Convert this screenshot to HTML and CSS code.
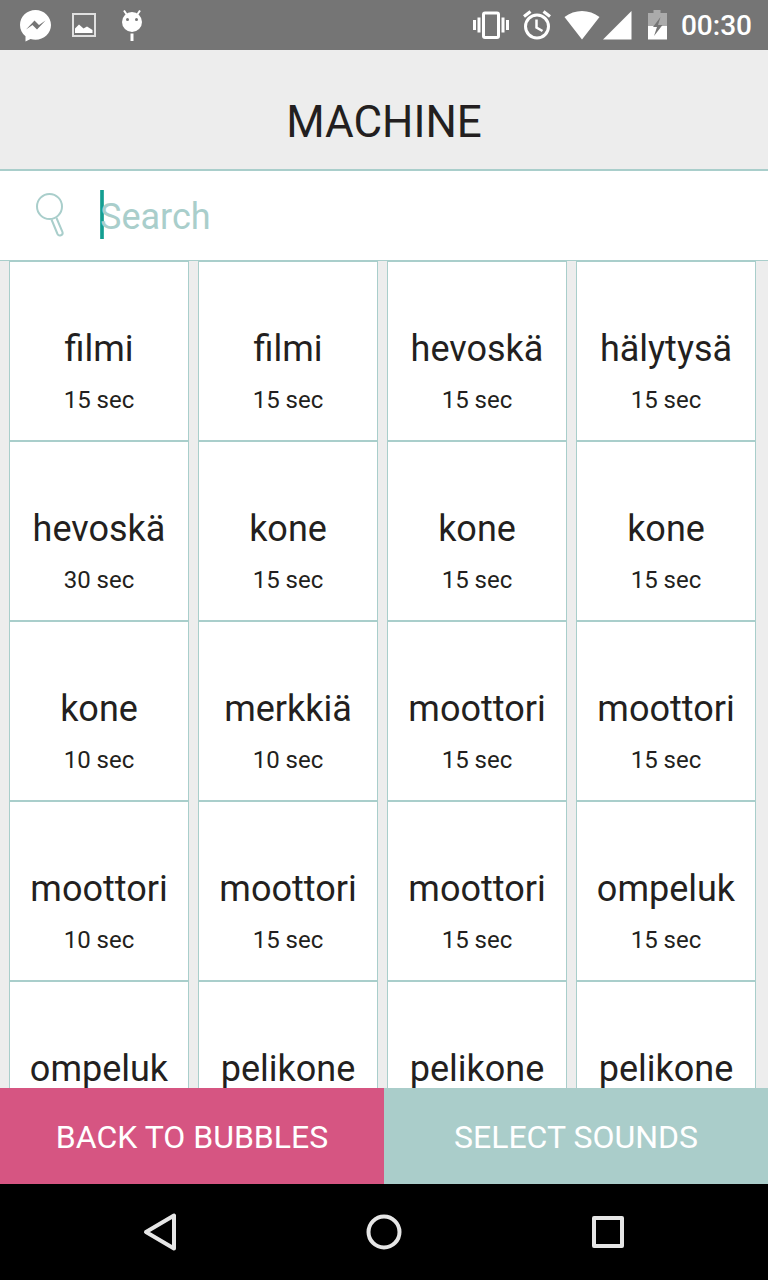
FILE: index.html
```html
<!DOCTYPE html>
<html lang="en">
<head>
<meta charset="utf-8">
<meta name="viewport" content="width=device-width, initial-scale=1">
<title>Machine</title>
<link rel="stylesheet" href="styles.css">
</head>
<body>
<div class="status">
  <svg class="status-icons" width="152" height="50" viewBox="0 0 152 50" aria-hidden="true">
    <path fill="#fff" d="M35.500 10C27 10 20 16.500 20 25c0 4.500 2 8.500 5.500 11.200V41.500l5-2.500c1.600.5 3.300.7 5 .7C44 39.700 51 33.200 51 25S44 10 35.500 10z"/>
    <path fill="#757575" d="M26 29.500l8.500-9 4.500 4.500 6.500-4.500-8.500 9-4.500-4.500z"/>
    <rect x="73" y="14" width="22" height="22" fill="none" stroke="#e0e0e0" stroke-width="2"/>
    <path fill="#fff" d="M75 33v-4.500l4-4 4.500 4 3.500-2 5.500 3.500v3z"/>
    <circle cx="132" cy="22" r="10" fill="#fff"/>
    <path stroke="#fff" stroke-width="2" d="M127 15l-3-4.500M137 15l3-4.500"/>
    <circle cx="127.500" cy="19.500" r="1.500" fill="#757575"/><circle cx="136.500" cy="19.500" r="1.500" fill="#757575"/>
    <path fill="#fff" d="M130.500 33.500h3V41h-3z"/>
  </svg>
  <svg class="status-icons" width="200" height="50" viewBox="470 0 200 50" aria-hidden="true">
    <path fill="#fff" d="M473 20h3v10h-3zM477.500 17.500h3v15h-3zM501.500 17.500h3v15h-3zM506 20h3v10h-3z"/>
    <rect x="483.500" y="13" width="15" height="24.500" rx="1.500" fill="none" stroke="#fff" stroke-width="3"/>
    <circle cx="537" cy="26.500" r="11.500" fill="none" stroke="#fff" stroke-width="3"/>
    <path fill="none" stroke="#fff" stroke-width="2.500" d="M536.500 19.500v8l6 3.500"/>
    <path stroke="#fff" stroke-width="3.200" d="M524 16.500l6.500-5M550 16.500l-6.500-5"/>
    <path fill="#fff" d="M564.500 17c10-8 25-8 35 0L582 39.500zM603 39.500L631.500 11v28.500z"/>
    <path fill="#ababab" d="M648 13h5.500v-3h7v3h6.500v13h-19z"/>
    <path fill="#fff" d="M648 26h19v13.500h-19z"/>
    <path fill="#757575" d="M660.500 17l-7.500 10h4l-3 9 8.500-11h-4.500z"/>
  </svg>
  <time class="clock">00:30</time>
</div>
<header class="header"><h1 class="title">MACHINE</h1></header>
<form class="search">
  <label class="search-label" for="q" aria-label="Search">
    <svg width="30" height="46" viewBox="0 0 30 46" fill="none" stroke="#a9cecb" stroke-width="2" aria-hidden="true">
      <circle cx="14.500" cy="14.500" r="12.500"/>
      <path d="M16.500 27.500l6 14.500c1.500 3 6 1 5-2l-6-14"/>
    </svg>
  </label>
  <div class="field">
    <span class="caret"></span>
    <input class="input" id="q" type="text" placeholder="Search">
  </div>
</form>
<main class="grid">
  <article class="card"><h2 class="name">filmi</h2><p class="length">15 sec</p></article>
  <article class="card"><h2 class="name">filmi</h2><p class="length">15 sec</p></article>
  <article class="card"><h2 class="name">hevoskä</h2><p class="length">15 sec</p></article>
  <article class="card"><h2 class="name">hälytysä</h2><p class="length">15 sec</p></article>
  <article class="card"><h2 class="name">hevoskä</h2><p class="length">30 sec</p></article>
  <article class="card"><h2 class="name">kone</h2><p class="length">15 sec</p></article>
  <article class="card"><h2 class="name">kone</h2><p class="length">15 sec</p></article>
  <article class="card"><h2 class="name">kone</h2><p class="length">15 sec</p></article>
  <article class="card"><h2 class="name">kone</h2><p class="length">10 sec</p></article>
  <article class="card"><h2 class="name">merkkiä</h2><p class="length">10 sec</p></article>
  <article class="card"><h2 class="name">moottori</h2><p class="length">15 sec</p></article>
  <article class="card"><h2 class="name">moottori</h2><p class="length">15 sec</p></article>
  <article class="card"><h2 class="name">moottori</h2><p class="length">10 sec</p></article>
  <article class="card"><h2 class="name">moottori</h2><p class="length">15 sec</p></article>
  <article class="card"><h2 class="name">moottori</h2><p class="length">15 sec</p></article>
  <article class="card"><h2 class="name">ompeluk</h2><p class="length">15 sec</p></article>
  <article class="card"><h2 class="name">ompeluk</h2></article>
  <article class="card"><h2 class="name">pelikone</h2></article>
  <article class="card"><h2 class="name">pelikone</h2></article>
  <article class="card"><h2 class="name">pelikone</h2></article>
</main>
<div class="actions">
  <button class="action back" type="button">BACK TO BUBBLES</button>
  <button class="action select" type="button">SELECT SOUNDS</button>
</div>
<nav class="navbar">
  <button class="key" type="button" aria-label="Back"><svg width="40" height="40" viewBox="0 0 40 40"><path d="M6 20L34 3.500v33z"/></svg></button>
  <button class="key" type="button" aria-label="Home"><svg width="40" height="40" viewBox="0 0 40 40"><circle cx="20" cy="20" r="15.500"/></svg></button>
  <button class="key" type="button" aria-label="Recent apps"><svg width="40" height="40" viewBox="0 0 40 40"><rect x="6" y="6" width="28" height="28"/></svg></button>
</nav>
</body>
</html>
```

FILE: styles.css
```css
* { box-sizing: border-box; }
body {
  margin: 0;
  height: 100vh;
  display: flex;
  flex-direction: column;
  background: #ededed;
  color: #231f20;
  font-family: Roboto, sans-serif;
}
h1, h2, p { margin: 0; font-weight: 400; }
button { border: 0; padding: 0; font: inherit; }
.status {
  flex: none;
  display: flex;
  align-items: center;
  background: #757575;
  padding-right: 16px;
}
.status-icons { display: block; }
.status-icons + .status-icons { margin-left: auto; }
.clock {
  margin-left: 11px;
  padding-top: 2px;
  color: #fff;
  font-size: 28px;
  line-height: 32px;
  font-weight: 500;
}
.header {
  flex: none;
  padding: 46px 16px 21px;
  border-bottom: 2px solid #a9cecb;
  text-align: center;
}
.title { font-size: 44px; line-height: 52px; }
.search {
  flex: none;
  display: flex;
  align-items: center;
  padding: 19px 36px 21px 35px;
  background: #fff;
  border-bottom: 1px solid #a9cecb;
}
.search-label { display: flex; }
.field { position: relative; flex: 1; margin-left: 35px; }
.caret {
  position: absolute;
  left: 0;
  top: 0;
  width: 4px;
  height: 100%;
  background: linear-gradient(90deg, #4db6ac, #009688 50%, #4db6ac);
}
.input {
  position: relative;
  display: block;
  width: 100%;
  height: 49px;
  padding: 4px 0 0;
  border: 0;
  outline: 0;
  background: transparent;
  color: #231f20;
  font: 36px/42px Roboto, sans-serif;
}
.input::placeholder { color: #a9cecb; opacity: 1; }
.grid {
  flex: 1;
  min-height: 0;
  overflow-y: auto;
  scrollbar-width: none;
  display: grid;
  grid-template-columns: repeat(4, minmax(0, 1fr));
  grid-auto-rows: min-content;
  column-gap: 9px;
  padding: 0 12px 0 9px;
}
.card {
  min-height: 180px;
  padding: 65px 0 25px;
  background: #fff;
  border: 1px solid #a9cecb;
  text-align: center;
}
.name { font-size: 36px; line-height: 44px; }
.length { margin-top: 14px; font-size: 24px; line-height: 30px; }
.actions { flex: none; display: grid; grid-template-columns: 1fr 1fr; }
.action { padding: 30px 0 28px; color: #fff; font-size: 32px; line-height: 38px; }
.back { background: #d65582; }
.select { background: #aacdca; }
.navbar {
  flex: none;
  display: flex;
  justify-content: center;
  gap: 24%;
  padding: 28px 0;
  background: #000;
}
.key { display: flex; background: none; }
.key svg { fill: none; stroke: #e6e6e6; stroke-width: 4; stroke-linejoin: round; }
```
